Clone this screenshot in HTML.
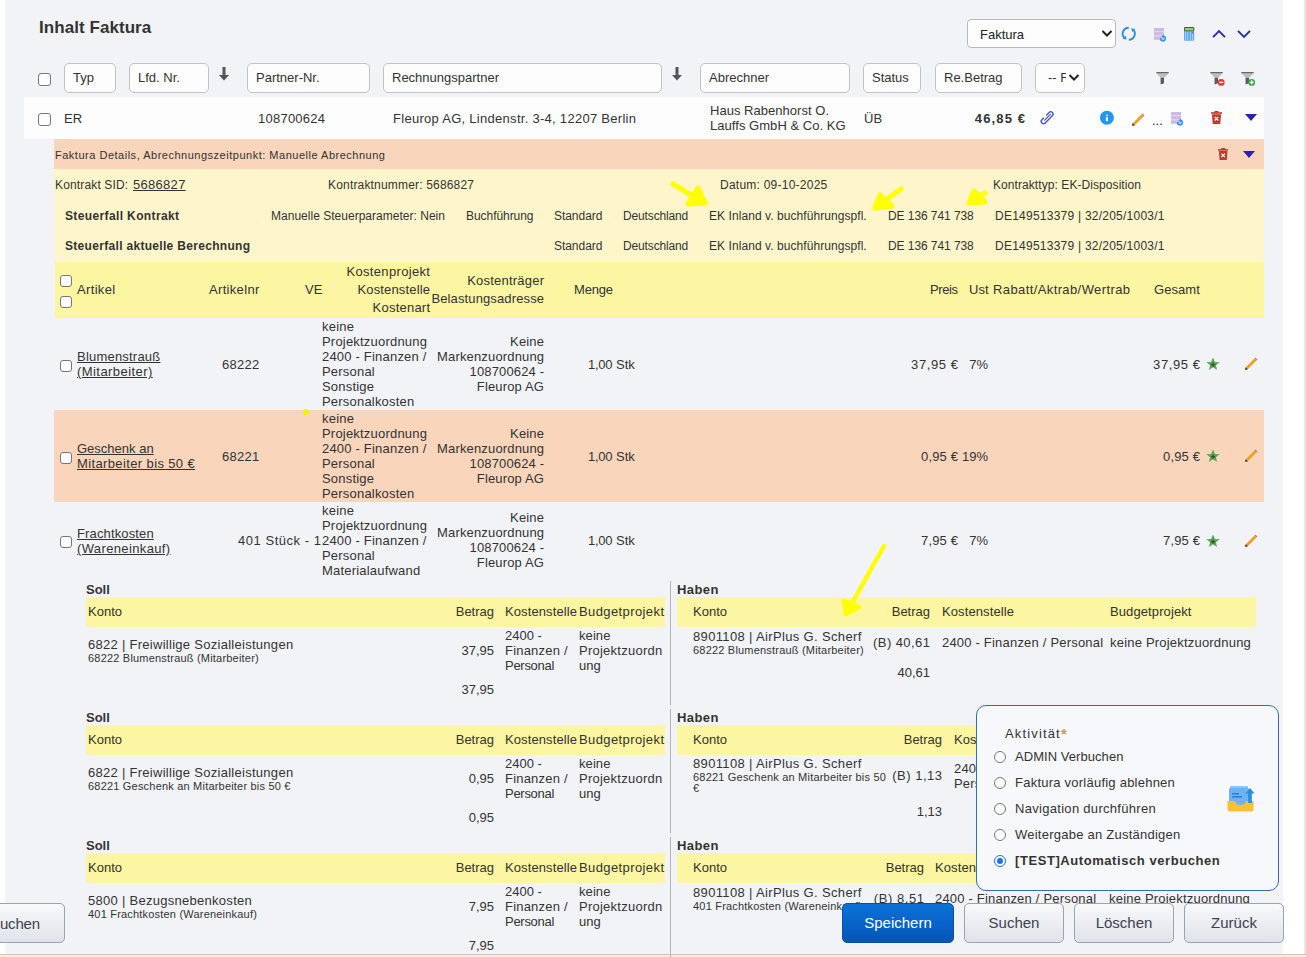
<!DOCTYPE html>
<html><head><meta charset="utf-8"><style>
html,body{margin:0;padding:0;width:1306px;height:957px;overflow:hidden;background:#fff;}
body{position:relative;font-family:"Liberation Sans",sans-serif;color:#333333;}
.a{position:absolute;}
.t{white-space:nowrap;}
.btn{box-sizing:border-box;border-radius:5px;font-size:15px;line-height:38px;text-align:center;font-family:"Liberation Sans",sans-serif;}
</style></head><body>
<div class="a" style="left:0px;top:0px;width:1306px;height:957px;background:#ffffff;"></div>
<div class="a" style="left:5px;top:0px;width:1278px;height:954px;background:#f2f3f7;"></div>
<div class="a" style="left:1304px;top:0px;width:2px;height:954px;background:#e6e6e6;"></div>
<div class="a" style="left:0px;top:954px;width:1306px;height:3px;background:#f6eed9;border-top:1px solid #d2c7ab;box-sizing:border-box;"></div>
<div class="a t" style="top:18.11px;font-size:17px;line-height:20px;letter-spacing:0.061px;font-weight:bold;color:#333;left:39.00px;">Inhalt Faktura</div>
<div class="a" style="left:967px;top:19px;width:149px;height:29px;background:#fdfdfd;border:1px solid #b9b9b9;border-radius:4px;box-sizing:border-box;"></div>
<div class="a t" style="top:27.00px;font-size:13px;line-height:15px;color:#222;left:980.00px;">Faktura</div>
<svg class="a" style="left:1101px;top:29px" width="12" height="9" viewBox="0 0 12 9"><path d="M1.5 2 L6 6.5 L10.5 2" fill="none" stroke="#222" stroke-width="2"/></svg>
<div class="a" style="left:38px;top:73px;width:13px;height:13px;background:#fff;border:1px solid #767676;border-radius:3px;box-sizing:border-box;"></div>
<div class="a" style="left:64px;top:63px;width:52px;height:30px;background:#fdfdfd;border:1px solid #c3c3c3;border-radius:5px;box-sizing:border-box;"></div>
<div class="a t" style="top:70.00px;font-size:13px;line-height:15px;left:73.00px;">Typ</div>
<div class="a" style="left:129px;top:63px;width:80px;height:30px;background:#fdfdfd;border:1px solid #c3c3c3;border-radius:5px;box-sizing:border-box;"></div>
<div class="a t" style="top:70.00px;font-size:13px;line-height:15px;left:138.00px;">Lfd. Nr.</div>
<div class="a" style="left:247px;top:63px;width:123px;height:30px;background:#fdfdfd;border:1px solid #c3c3c3;border-radius:5px;box-sizing:border-box;"></div>
<div class="a t" style="top:70.00px;font-size:13px;line-height:15px;left:256.00px;">Partner-Nr.</div>
<div class="a" style="left:383px;top:63px;width:279px;height:30px;background:#fdfdfd;border:1px solid #c3c3c3;border-radius:5px;box-sizing:border-box;"></div>
<div class="a t" style="top:70.00px;font-size:13px;line-height:15px;left:392.00px;">Rechnungspartner</div>
<div class="a" style="left:700px;top:63px;width:150px;height:30px;background:#fdfdfd;border:1px solid #c3c3c3;border-radius:5px;box-sizing:border-box;"></div>
<div class="a t" style="top:70.00px;font-size:13px;line-height:15px;left:709.00px;">Abrechner</div>
<div class="a" style="left:863px;top:63px;width:58px;height:30px;background:#fdfdfd;border:1px solid #c3c3c3;border-radius:5px;box-sizing:border-box;"></div>
<div class="a t" style="top:70.00px;font-size:13px;line-height:15px;left:872.00px;">Status</div>
<div class="a" style="left:935px;top:63px;width:87px;height:30px;background:#fdfdfd;border:1px solid #c3c3c3;border-radius:5px;box-sizing:border-box;"></div>
<div class="a t" style="top:70.00px;font-size:13px;line-height:15px;left:944.00px;">Re.Betrag</div>
<div class="a" style="left:1035px;top:63px;width:50px;height:30px;background:#fdfdfd;border:1px solid #c3c3c3;border-radius:5px;box-sizing:border-box;"></div>
<div class="a t" style="top:70.00px;font-size:13px;line-height:15px;left:1048.00px;">-- F</div>
<div class="a" style="left:1066px;top:66px;width:18px;height:24px;background:#fdfdfd;"></div>
<svg class="a" style="left:1068px;top:73px" width="12" height="9" viewBox="0 0 12 9"><path d="M1.5 2 L6 6.5 L10.5 2" fill="none" stroke="#222" stroke-width="2"/></svg>
<svg class="a" style="left:218px;top:67px" width="12" height="14" viewBox="0 0 12 14"><path d="M4.5 0 H7.5 V8 H11 L6 13.5 L1 8 H4.5 Z" fill="#555"/></svg>
<svg class="a" style="left:671px;top:67px" width="12" height="14" viewBox="0 0 12 14"><path d="M4.5 0 H7.5 V8 H11 L6 13.5 L1 8 H4.5 Z" fill="#555"/></svg>
<svg class="a" style="left:1155.5px;top:71px" width="17" height="16" viewBox="0 0 17 16"><path d="M0.5 2.2 H12.5 L8.2 6.8 H4.6 Z" fill="#bdbdbd"/><rect x="0.3" y="1" width="12.4" height="1.3" fill="#666"/><path d="M4.6 6.8 H8.0 V12.2 L4.6 13.6 Z" fill="#5a5a5a"/></svg>
<svg class="a" style="left:1209.8px;top:71px" width="17" height="16" viewBox="0 0 17 16"><path d="M0.5 2.2 H12.5 L8.2 6.8 H4.6 Z" fill="#bdbdbd"/><rect x="0.3" y="1" width="12.4" height="1.3" fill="#666"/><path d="M4.6 6.8 H8.0 V12.2 L4.6 13.6 Z" fill="#5a5a5a"/><circle cx="11.2" cy="11.4" r="3.4" fill="#f03434"/><rect x="9.2" y="10.7" width="4" height="1.4" fill="#fff"/></svg>
<svg class="a" style="left:1240.8px;top:71px" width="17" height="16" viewBox="0 0 17 16"><path d="M0.5 2.2 H12.5 L8.2 6.8 H4.6 Z" fill="#bdbdbd"/><rect x="0.3" y="1" width="12.4" height="1.3" fill="#666"/><path d="M4.6 6.8 H8.0 V12.2 L4.6 13.6 Z" fill="#5a5a5a"/><circle cx="10.7" cy="11.4" r="3.4" fill="#36a843"/><rect x="8.7" y="10.7" width="4" height="1.4" fill="#fff"/><rect x="10" y="9.4" width="1.4" height="4" fill="#fff"/></svg>
<svg class="a" style="left:1118px;top:23px" width="24" height="22" viewBox="0 0 24 22">
<path d="M10.8 4.8 A6 6 0 0 0 6.3 14.9" fill="none" stroke="#2b8fe0" stroke-width="1.9"/>
<path d="M4.7 15.8 L7.8 12.8 L8.6 16.5 Z" fill="#2b8fe0"/>
<path d="M10.8 16.8 A6 6 0 0 0 15.2 6.7" fill="none" stroke="#2b8fe0" stroke-width="1.9"/>
<path d="M13.3 5.3 L17.2 6.1 L14.3 8.9 Z" fill="#2b8fe0"/>
</svg>
<svg class="a" style="left:1153px;top:27px" width="15" height="16" viewBox="0 0 15 16">
<rect x="1" y="1" width="10" height="11.7" fill="#e0d4ef"/>
<rect x="1" y="1" width="10" height="3" fill="#cdb8e6"/>
<rect x="1" y="5.2" width="10" height="3" fill="#cdb8e6"/>
<rect x="1" y="9.6" width="10" height="3.1" fill="#cdb8e6"/>
<path d="M10.4 9.3 A2.3 2.3 0 1 1 7.73 11.2" fill="none" stroke="#2196f3" stroke-width="1.6"/>
<path d="M11.0 7.7 L11.0 10.9 L8.3 9.3 Z" fill="#2196f3"/>
</svg>
<svg class="a" style="left:1183px;top:26px" width="12" height="16" viewBox="0 0 12 16">
<rect x="1" y="1" width="10.2" height="13.8" rx="1.4" fill="#5aa9ef"/>
<rect x="1" y="1" width="10.2" height="4.2" rx="1.2" fill="#4a4a4a"/>
<rect x="1.8" y="1.9" width="8.6" height="2.6" fill="#8fd35f"/>
<rect x="2.2" y="5.6" width="0.8" height="8.8" fill="#b5d9f7"/>
<rect x="4.3" y="5.6" width="0.8" height="8.8" fill="#b5d9f7"/>
<rect x="7.0" y="5.6" width="0.8" height="8.8" fill="#b5d9f7"/>
<rect x="9.2" y="5.6" width="0.8" height="8.8" fill="#b5d9f7"/>
<rect x="9.0" y="5.8" width="1.2" height="2" fill="#e0505a"/>
</svg>
<svg class="a" style="left:1211px;top:28px" width="16" height="12" viewBox="0 0 16 12"><path d="M2 9.2 L8 3 L14 9.2" fill="none" stroke="#2b2bb8" stroke-width="1.9"/></svg>
<svg class="a" style="left:1236px;top:28px" width="16" height="12" viewBox="0 0 16 12"><path d="M2 2.8 L8 9 L14 2.8" fill="none" stroke="#2b2bb8" stroke-width="1.9"/></svg>
<div class="a" style="left:24px;top:97px;width:1240px;height:42px;background:#fdfdfd;"></div>
<div class="a" style="left:38px;top:113px;width:13px;height:13px;background:#fff;border:1px solid #767676;border-radius:3px;box-sizing:border-box;"></div>
<div class="a t" style="top:111.00px;font-size:13px;line-height:15px;left:64.00px;">ER</div>
<div class="a t" style="top:111.00px;font-size:13px;line-height:15px;letter-spacing:0.242px;left:258.00px;">108700624</div>
<div class="a t" style="top:111.00px;font-size:13px;line-height:15px;letter-spacing:0.282px;left:393.00px;">Fleurop AG, Lindenstr. 3-4, 12207 Berlin</div>
<div class="a t" style="top:103.00px;font-size:13px;line-height:15px;letter-spacing:0.030px;left:710.00px;">Haus Rabenhorst O.</div>
<div class="a t" style="top:118.00px;font-size:13px;line-height:15px;letter-spacing:0.043px;left:710.00px;">Lauffs GmbH &amp; Co. KG</div>
<div class="a t" style="top:111.00px;font-size:13px;line-height:15px;left:864.00px;">ÜB</div>
<div class="a t" style="top:111.00px;font-size:13px;line-height:15px;letter-spacing:1.141px;font-weight:bold;left:974.80px;">46,85 €</div>
<svg class="a" style="left:1039px;top:109px" width="17" height="17" viewBox="0 0 17 17">
<g transform="translate(8.2 8.6) rotate(45)">
<path d="M-2.3 -1.5 V-5 A2.3 2.3 0 0 1 2.3 -5 V5.2 A2.3 2.3 0 0 1 -2.3 5.2 V3" fill="none" stroke="#4a56bd" stroke-width="1.4" stroke-linecap="round"/>
<path d="M0 -4.6 V3.6" fill="none" stroke="#4a56bd" stroke-width="1.3" stroke-linecap="round"/>
</g></svg>
<svg class="a" style="left:1099px;top:110px" width="16" height="16" viewBox="0 0 16 16"><circle cx="7.9" cy="7.7" r="7" fill="#2196f3"/><rect x="6.9" y="7.2" width="2" height="3.9" fill="#fff"/><rect x="6.9" y="4.7" width="2" height="1.5" fill="#fff"/></svg>
<svg class="a" style="left:1131px;top:113px" width="14" height="14" viewBox="0 0 14 14">
<path d="M1 13 L1.8 10.2 L10.4 1.6 L12.4 3.6 L3.8 12.2 Z" fill="#f0a020"/>
<path d="M10.4 1.6 L11.4 0.6 L13.4 2.6 L12.4 3.6 Z" fill="#e07070"/>
<path d="M1 13 L1.8 10.2 L3.8 12.2 Z" fill="#333"/>
</svg>
<div class="a t" style="top:113.00px;font-size:13px;line-height:15px;color:#223;left:1152.00px;">...</div>
<svg class="a" style="left:1170px;top:111px" width="15" height="16" viewBox="0 0 15 16">
<rect x="1" y="1" width="10" height="11.7" fill="#e0d4ef"/>
<rect x="1" y="1" width="10" height="3" fill="#cdb8e6"/>
<rect x="1" y="5.2" width="10" height="3" fill="#cdb8e6"/>
<rect x="1" y="9.6" width="10" height="3.1" fill="#cdb8e6"/>
<path d="M10.4 9.3 A2.3 2.3 0 1 1 7.73 11.2" fill="none" stroke="#2196f3" stroke-width="1.6"/>
<path d="M11.0 7.7 L11.0 10.9 L8.3 9.3 Z" fill="#2196f3"/>
</svg>
<svg class="a" style="left:1211px;top:111px" width="11.0" height="13.0" viewBox="0 0 11 13">
<rect x="0" y="1.2" width="11" height="1.6" fill="#c0392b"/>
<rect x="3.5" y="0" width="4" height="1.6" fill="#c0392b"/>
<path d="M1 3.2 H10 L9.3 13 H1.7 Z" fill="#c0392b"/>
<path d="M3.7 5.9 L7.3 9.5 M7.3 5.9 L3.7 9.5" stroke="#fff" stroke-width="1.2"/>
</svg>
<svg class="a" style="left:1245px;top:114px" width="12" height="7" viewBox="0 0 12 7"><path d="M0 0 H12 L6.0 7 Z" fill="#2a22b8"/></svg>
<div class="a" style="left:54px;top:139px;width:1210px;height:30px;background:#f8d5bb;"></div>
<div class="a t" style="top:148.69px;font-size:11px;line-height:13px;letter-spacing:0.511px;left:55.00px;">Faktura Details, Abrechnungszeitpunkt: Manuelle Abrechnung</div>
<svg class="a" style="left:1218px;top:148px" width="10.4" height="12.3" viewBox="0 0 11 13">
<rect x="0" y="1.2" width="11" height="1.6" fill="#c0392b"/>
<rect x="3.5" y="0" width="4" height="1.6" fill="#c0392b"/>
<path d="M1 3.2 H10 L9.3 13 H1.7 Z" fill="#c0392b"/>
<path d="M3.7 5.9 L7.3 9.5 M7.3 5.9 L3.7 9.5" stroke="#fff" stroke-width="1.2"/>
</svg>
<svg class="a" style="left:1243px;top:151px" width="12" height="7" viewBox="0 0 12 7"><path d="M0 0 H12 L6.0 7 Z" fill="#2a22b8"/></svg>
<div class="a" style="left:54px;top:169px;width:1210px;height:92px;background:#fef6ca;"></div>
<div class="a t" style="top:177.84px;font-size:12px;line-height:14px;letter-spacing:0.147px;left:55.00px;">Kontrakt SID:</div>
<div class="a t" style="top:177.00px;font-size:13px;line-height:15px;letter-spacing:0.294px;text-decoration:underline;left:133.00px;">5686827</div>
<div class="a t" style="top:177.84px;font-size:12px;line-height:14px;letter-spacing:0.178px;left:328.00px;">Kontraktnummer: 5686827</div>
<div class="a t" style="top:177.84px;font-size:12px;line-height:14px;letter-spacing:0.239px;left:720.00px;">Datum: 09-10-2025</div>
<div class="a t" style="top:177.84px;font-size:12px;line-height:14px;letter-spacing:0.072px;left:993.00px;">Kontrakttyp: EK-Disposition</div>
<div class="a t" style="top:208.84px;font-size:12px;line-height:14px;letter-spacing:0.370px;font-weight:bold;left:65.00px;">Steuerfall Kontrakt</div>
<div class="a t" style="top:208.84px;font-size:12px;line-height:14px;letter-spacing:0.019px;left:271.00px;">Manuelle Steuerparameter: Nein</div>
<div class="a t" style="top:208.84px;font-size:12px;line-height:14px;letter-spacing:-0.054px;left:466.00px;">Buchführung</div>
<div class="a t" style="top:208.84px;font-size:12px;line-height:14px;letter-spacing:-0.046px;left:554.00px;">Standard</div>
<div class="a t" style="top:208.84px;font-size:12px;line-height:14px;letter-spacing:-0.142px;left:623.00px;">Deutschland</div>
<div class="a t" style="top:208.84px;font-size:12px;line-height:14px;letter-spacing:0.065px;left:709.00px;">EK Inland v. buchführungspfl.</div>
<div class="a t" style="top:208.84px;font-size:12px;line-height:14px;letter-spacing:-0.074px;left:888.00px;">DE 136 741 738</div>
<div class="a t" style="top:208.84px;font-size:12px;line-height:14px;letter-spacing:0.240px;left:995.00px;">DE149513379 | 32/205/1003/1</div>
<div class="a t" style="top:238.84px;font-size:12px;line-height:14px;letter-spacing:-0.046px;left:554.00px;">Standard</div>
<div class="a t" style="top:238.84px;font-size:12px;line-height:14px;letter-spacing:-0.142px;left:623.00px;">Deutschland</div>
<div class="a t" style="top:238.84px;font-size:12px;line-height:14px;letter-spacing:0.065px;left:709.00px;">EK Inland v. buchführungspfl.</div>
<div class="a t" style="top:238.84px;font-size:12px;line-height:14px;letter-spacing:-0.074px;left:888.00px;">DE 136 741 738</div>
<div class="a t" style="top:238.84px;font-size:12px;line-height:14px;letter-spacing:0.240px;left:995.00px;">DE149513379 | 32/205/1003/1</div>
<div class="a t" style="top:238.84px;font-size:12px;line-height:14px;letter-spacing:0.309px;font-weight:bold;left:65.00px;">Steuerfall aktuelle Berechnung</div>
<div class="a" style="left:55px;top:262px;width:1209px;height:56px;background:#fcf5a1;"></div>
<div class="a" style="left:60px;top:275px;width:12px;height:12px;background:#fff;border:1px solid #767676;border-radius:3px;box-sizing:border-box;"></div>
<div class="a" style="left:60px;top:296px;width:12px;height:12px;background:#fff;border:1px solid #767676;border-radius:3px;box-sizing:border-box;"></div>
<div class="a t" style="top:282.00px;font-size:13px;line-height:15px;letter-spacing:0.343px;left:77.00px;">Artikel</div>
<div class="a t" style="top:282.00px;font-size:13px;line-height:15px;letter-spacing:0.324px;left:209.00px;">Artikelnr</div>
<div class="a t" style="top:282.00px;font-size:13px;line-height:15px;left:305.00px;">VE</div>
<div class="a t" style="top:264.00px;font-size:13px;line-height:15px;letter-spacing:0.342px;left:346.40px;">Kostenprojekt</div>
<div class="a t" style="top:282.00px;font-size:13px;line-height:15px;letter-spacing:0.150px;left:357.50px;">Kostenstelle</div>
<div class="a t" style="top:300.00px;font-size:13px;line-height:15px;letter-spacing:0.220px;left:372.60px;">Kostenart</div>
<div class="a t" style="top:273.00px;font-size:13px;line-height:15px;letter-spacing:0.216px;left:467.20px;">Kostenträger</div>
<div class="a t" style="top:291.00px;font-size:13px;line-height:15px;letter-spacing:0.127px;left:431.40px;">Belastungsadresse</div>
<div class="a t" style="top:282.00px;font-size:13px;line-height:15px;letter-spacing:-0.170px;left:574.00px;">Menge</div>
<div class="a t" style="top:282.00px;font-size:13px;line-height:15px;letter-spacing:-0.435px;left:930.10px;">Preis</div>
<div class="a t" style="top:282.00px;font-size:13px;line-height:15px;left:969.00px;">Ust</div>
<div class="a t" style="top:282.00px;font-size:13px;line-height:15px;letter-spacing:0.395px;left:993.00px;">Rabatt/Aktrab/Wertrab</div>
<div class="a t" style="top:282.00px;font-size:13px;line-height:15px;letter-spacing:0.060px;left:1154.00px;">Gesamt</div>
<div class="a" style="left:60px;top:360px;width:12px;height:12px;background:#fff;border:1px solid #767676;border-radius:3px;box-sizing:border-box;"></div>
<div class="a t" style="top:349.30px;font-size:13px;line-height:15px;letter-spacing:0.207px;text-decoration:underline;left:77.00px;">Blumenstrauß</div>
<div class="a t" style="top:364.30px;font-size:13px;line-height:15px;letter-spacing:0.436px;text-decoration:underline;left:77.00px;">(Mitarbeiter)</div>
<div class="a t" style="top:356.80px;font-size:13px;line-height:15px;letter-spacing:0.265px;left:222.00px;">68222</div>
<div class="a t" style="top:318.50px;font-size:13px;line-height:15px;letter-spacing:0.200px;left:322.00px;">keine</div>
<div class="a t" style="top:333.50px;font-size:13px;line-height:15px;letter-spacing:0.200px;left:322.00px;">Projektzuordnung</div>
<div class="a t" style="top:348.50px;font-size:13px;line-height:15px;letter-spacing:0.200px;left:322.00px;">2400 - Finanzen /</div>
<div class="a t" style="top:363.50px;font-size:13px;line-height:15px;letter-spacing:0.200px;left:322.00px;">Personal</div>
<div class="a t" style="top:378.50px;font-size:13px;line-height:15px;letter-spacing:0.200px;left:322.00px;">Sonstige</div>
<div class="a t" style="top:393.50px;font-size:13px;line-height:15px;letter-spacing:0.200px;left:322.00px;">Personalkosten</div>
<div class="a t" style="top:333.50px;font-size:13px;line-height:15px;letter-spacing:0.150px;left:510.12px;">Keine</div>
<div class="a t" style="top:348.50px;font-size:13px;line-height:15px;letter-spacing:0.150px;left:437.12px;">Markenzuordnung</div>
<div class="a t" style="top:363.50px;font-size:13px;line-height:15px;letter-spacing:0.150px;left:469.50px;">108700624 -</div>
<div class="a t" style="top:378.50px;font-size:13px;line-height:15px;letter-spacing:0.150px;left:476.87px;">Fleurop AG</div>
<div class="a t" style="top:356.80px;font-size:13px;line-height:15px;letter-spacing:-0.262px;left:588.00px;">1,00</div>
<div class="a t" style="top:356.80px;font-size:13px;line-height:15px;left:616.00px;">Stk</div>
<div class="a t" style="top:356.80px;font-size:13px;line-height:15px;letter-spacing:0.591px;left:911.10px;">37,95 €</div>
<div class="a t" style="top:356.80px;font-size:13px;line-height:15px;left:969.22px;">7%</div>
<div class="a t" style="top:356.80px;font-size:13px;line-height:15px;letter-spacing:0.591px;left:1153.10px;">37,95 €</div>
<svg class="a" style="left:1206px;top:357px" width="14" height="14" viewBox="0 0 14 14"><path d="M7 0.5 L8.9 5 L13.6 5.2 L9.9 8.2 L11.1 13 L7 10.3 L2.9 13 L4.1 8.2 L0.4 5.2 L5.1 5 Z" fill="#4caf50"/><rect x="6.3" y="5.6" width="1.4" height="4.2" fill="#5d4037"/><rect x="4.9" y="7" width="4.2" height="1.4" fill="#5d4037"/></svg>
<svg class="a" style="left:1244px;top:357px" width="14" height="14" viewBox="0 0 14 14">
<path d="M1 13 L1.8 10.2 L10.4 1.6 L12.4 3.6 L3.8 12.2 Z" fill="#f0a020"/>
<path d="M10.4 1.6 L11.4 0.6 L13.4 2.6 L12.4 3.6 Z" fill="#e07070"/>
<path d="M1 13 L1.8 10.2 L3.8 12.2 Z" fill="#333"/>
</svg>
<div class="a" style="left:54px;top:410px;width:1210px;height:92px;background:#f8d5bb;"></div>
<div class="a" style="left:60px;top:452px;width:12px;height:12px;background:#fff;border:1px solid #767676;border-radius:3px;box-sizing:border-box;"></div>
<div class="a t" style="top:441.30px;font-size:13px;line-height:15px;letter-spacing:0.006px;text-decoration:underline;left:77.00px;">Geschenk an</div>
<div class="a t" style="top:456.30px;font-size:13px;line-height:15px;letter-spacing:0.376px;text-decoration:underline;left:77.00px;">Mitarbeiter bis 50 €</div>
<div class="a t" style="top:448.80px;font-size:13px;line-height:15px;letter-spacing:0.265px;left:222.00px;">68221</div>
<div class="a t" style="top:410.50px;font-size:13px;line-height:15px;letter-spacing:0.200px;left:322.00px;">keine</div>
<div class="a t" style="top:425.50px;font-size:13px;line-height:15px;letter-spacing:0.200px;left:322.00px;">Projektzuordnung</div>
<div class="a t" style="top:440.50px;font-size:13px;line-height:15px;letter-spacing:0.200px;left:322.00px;">2400 - Finanzen /</div>
<div class="a t" style="top:455.50px;font-size:13px;line-height:15px;letter-spacing:0.200px;left:322.00px;">Personal</div>
<div class="a t" style="top:470.50px;font-size:13px;line-height:15px;letter-spacing:0.200px;left:322.00px;">Sonstige</div>
<div class="a t" style="top:485.50px;font-size:13px;line-height:15px;letter-spacing:0.200px;left:322.00px;">Personalkosten</div>
<div class="a t" style="top:425.50px;font-size:13px;line-height:15px;letter-spacing:0.150px;left:510.12px;">Keine</div>
<div class="a t" style="top:440.50px;font-size:13px;line-height:15px;letter-spacing:0.150px;left:437.12px;">Markenzuordnung</div>
<div class="a t" style="top:455.50px;font-size:13px;line-height:15px;letter-spacing:0.150px;left:469.50px;">108700624 -</div>
<div class="a t" style="top:470.50px;font-size:13px;line-height:15px;letter-spacing:0.150px;left:476.87px;">Fleurop AG</div>
<div class="a t" style="top:448.80px;font-size:13px;line-height:15px;letter-spacing:-0.262px;left:588.00px;">1,00</div>
<div class="a t" style="top:448.80px;font-size:13px;line-height:15px;left:616.00px;">Stk</div>
<div class="a t" style="top:448.80px;font-size:13px;line-height:15px;letter-spacing:0.172px;left:921.00px;">0,95 €</div>
<div class="a t" style="top:448.80px;font-size:13px;line-height:15px;left:962.00px;">19%</div>
<div class="a t" style="top:448.80px;font-size:13px;line-height:15px;letter-spacing:0.172px;left:1163.00px;">0,95 €</div>
<svg class="a" style="left:1206px;top:449px" width="14" height="14" viewBox="0 0 14 14"><path d="M7 0.5 L8.9 5 L13.6 5.2 L9.9 8.2 L11.1 13 L7 10.3 L2.9 13 L4.1 8.2 L0.4 5.2 L5.1 5 Z" fill="#4caf50"/><rect x="6.3" y="5.6" width="1.4" height="4.2" fill="#5d4037"/><rect x="4.9" y="7" width="4.2" height="1.4" fill="#5d4037"/></svg>
<svg class="a" style="left:1244px;top:449px" width="14" height="14" viewBox="0 0 14 14">
<path d="M1 13 L1.8 10.2 L10.4 1.6 L12.4 3.6 L3.8 12.2 Z" fill="#f0a020"/>
<path d="M10.4 1.6 L11.4 0.6 L13.4 2.6 L12.4 3.6 Z" fill="#e07070"/>
<path d="M1 13 L1.8 10.2 L3.8 12.2 Z" fill="#333"/>
</svg>
<div class="a" style="left:60px;top:536px;width:12px;height:12px;background:#fff;border:1px solid #767676;border-radius:3px;box-sizing:border-box;"></div>
<div class="a t" style="top:525.80px;font-size:13px;line-height:15px;letter-spacing:0.142px;text-decoration:underline;left:77.00px;">Frachtkosten</div>
<div class="a t" style="top:540.80px;font-size:13px;line-height:15px;letter-spacing:0.369px;text-decoration:underline;left:77.00px;">(Wareneinkauf)</div>
<div class="a t" style="top:533.30px;font-size:13px;line-height:15px;letter-spacing:0.536px;left:238.00px;">401 Stück - 1</div>
<div class="a t" style="top:502.50px;font-size:13px;line-height:15px;letter-spacing:0.200px;left:322.00px;">keine</div>
<div class="a t" style="top:517.50px;font-size:13px;line-height:15px;letter-spacing:0.200px;left:322.00px;">Projektzuordnung</div>
<div class="a t" style="top:532.50px;font-size:13px;line-height:15px;letter-spacing:0.200px;left:322.00px;">2400 - Finanzen /</div>
<div class="a t" style="top:547.50px;font-size:13px;line-height:15px;letter-spacing:0.200px;left:322.00px;">Personal</div>
<div class="a t" style="top:562.50px;font-size:13px;line-height:15px;letter-spacing:0.200px;left:322.00px;">Materialaufwand</div>
<div class="a t" style="top:510.00px;font-size:13px;line-height:15px;letter-spacing:0.150px;left:510.12px;">Keine</div>
<div class="a t" style="top:525.00px;font-size:13px;line-height:15px;letter-spacing:0.150px;left:437.12px;">Markenzuordnung</div>
<div class="a t" style="top:540.00px;font-size:13px;line-height:15px;letter-spacing:0.150px;left:469.50px;">108700624 -</div>
<div class="a t" style="top:555.00px;font-size:13px;line-height:15px;letter-spacing:0.150px;left:476.87px;">Fleurop AG</div>
<div class="a t" style="top:533.30px;font-size:13px;line-height:15px;letter-spacing:-0.262px;left:588.00px;">1,00</div>
<div class="a t" style="top:533.30px;font-size:13px;line-height:15px;left:616.00px;">Stk</div>
<div class="a t" style="top:533.30px;font-size:13px;line-height:15px;letter-spacing:0.172px;left:921.00px;">7,95 €</div>
<div class="a t" style="top:533.30px;font-size:13px;line-height:15px;left:969.22px;">7%</div>
<div class="a t" style="top:533.30px;font-size:13px;line-height:15px;letter-spacing:0.172px;left:1163.00px;">7,95 €</div>
<svg class="a" style="left:1206px;top:534px" width="14" height="14" viewBox="0 0 14 14"><path d="M7 0.5 L8.9 5 L13.6 5.2 L9.9 8.2 L11.1 13 L7 10.3 L2.9 13 L4.1 8.2 L0.4 5.2 L5.1 5 Z" fill="#4caf50"/><rect x="6.3" y="5.6" width="1.4" height="4.2" fill="#5d4037"/><rect x="4.9" y="7" width="4.2" height="1.4" fill="#5d4037"/></svg>
<svg class="a" style="left:1244px;top:534px" width="14" height="14" viewBox="0 0 14 14">
<path d="M1 13 L1.8 10.2 L10.4 1.6 L12.4 3.6 L3.8 12.2 Z" fill="#f0a020"/>
<path d="M10.4 1.6 L11.4 0.6 L13.4 2.6 L12.4 3.6 Z" fill="#e07070"/>
<path d="M1 13 L1.8 10.2 L3.8 12.2 Z" fill="#333"/>
</svg>
<div class="a" style="left:303px;top:409px;width:6px;height:6px;border-radius:3px;background:#f7f000"></div>
<div class="a t" style="top:582.30px;font-size:13px;line-height:15px;font-weight:bold;left:86.00px;">Soll</div>
<div class="a" style="left:86px;top:597px;width:579px;height:30px;background:#fcf5a1;"></div>
<div class="a t" style="top:603.50px;font-size:13px;line-height:15px;left:88.00px;">Konto</div>
<div class="a t" style="top:603.50px;font-size:13px;line-height:15px;left:455.72px;">Betrag</div>
<div class="a t" style="top:603.50px;font-size:13px;line-height:15px;letter-spacing:0.105px;left:505.00px;">Kostenstelle</div>
<div class="a t" style="top:603.50px;font-size:13px;line-height:15px;letter-spacing:0.399px;left:579.00px;">Budgetprojekt</div>
<div class="a t" style="top:637.40px;font-size:13px;line-height:15px;letter-spacing:0.280px;left:88.00px;">6822 | Freiwillige Sozialleistungen</div>
<div class="a t" style="top:651.99px;font-size:11px;line-height:13px;letter-spacing:0.200px;left:88.00px;">68222 Blumenstrauß (Mitarbeiter)</div>
<div class="a t" style="top:643.40px;font-size:13px;line-height:15px;left:461.44px;">37,95</div>
<div class="a t" style="top:628.40px;font-size:13px;line-height:15px;left:505.00px;">2400 -</div>
<div class="a t" style="top:643.40px;font-size:13px;line-height:15px;letter-spacing:0.200px;left:505.00px;">Finanzen /</div>
<div class="a t" style="top:658.40px;font-size:13px;line-height:15px;letter-spacing:-0.284px;left:505.00px;">Personal</div>
<div class="a t" style="top:628.40px;font-size:13px;line-height:15px;letter-spacing:0.082px;left:579.00px;">keine</div>
<div class="a t" style="top:643.40px;font-size:13px;line-height:15px;letter-spacing:0.250px;left:579.00px;">Projektzuordn</div>
<div class="a t" style="top:658.40px;font-size:13px;line-height:15px;left:579.00px;">ung</div>
<div class="a t" style="top:682.20px;font-size:13px;line-height:15px;left:461.44px;">37,95</div>
<div class="a" style="left:670px;top:581px;width:1px;height:124px;background:#b4b4b4;"></div>
<div class="a t" style="top:710.30px;font-size:13px;line-height:15px;font-weight:bold;left:86.00px;">Soll</div>
<div class="a" style="left:86px;top:725px;width:579px;height:30px;background:#fcf5a1;"></div>
<div class="a t" style="top:731.50px;font-size:13px;line-height:15px;left:88.00px;">Konto</div>
<div class="a t" style="top:731.50px;font-size:13px;line-height:15px;left:455.72px;">Betrag</div>
<div class="a t" style="top:731.50px;font-size:13px;line-height:15px;letter-spacing:0.105px;left:505.00px;">Kostenstelle</div>
<div class="a t" style="top:731.50px;font-size:13px;line-height:15px;letter-spacing:0.399px;left:579.00px;">Budgetprojekt</div>
<div class="a t" style="top:765.40px;font-size:13px;line-height:15px;letter-spacing:0.280px;left:88.00px;">6822 | Freiwillige Sozialleistungen</div>
<div class="a t" style="top:779.99px;font-size:11px;line-height:13px;letter-spacing:0.200px;left:88.00px;">68221 Geschenk an Mitarbeiter bis 50 €</div>
<div class="a t" style="top:771.40px;font-size:13px;line-height:15px;left:468.71px;">0,95</div>
<div class="a t" style="top:756.40px;font-size:13px;line-height:15px;left:505.00px;">2400 -</div>
<div class="a t" style="top:771.40px;font-size:13px;line-height:15px;letter-spacing:0.200px;left:505.00px;">Finanzen /</div>
<div class="a t" style="top:786.40px;font-size:13px;line-height:15px;letter-spacing:-0.284px;left:505.00px;">Personal</div>
<div class="a t" style="top:756.40px;font-size:13px;line-height:15px;letter-spacing:0.082px;left:579.00px;">keine</div>
<div class="a t" style="top:771.40px;font-size:13px;line-height:15px;letter-spacing:0.250px;left:579.00px;">Projektzuordn</div>
<div class="a t" style="top:786.40px;font-size:13px;line-height:15px;left:579.00px;">ung</div>
<div class="a t" style="top:810.20px;font-size:13px;line-height:15px;left:468.71px;">0,95</div>
<div class="a" style="left:670px;top:709px;width:1px;height:124px;background:#b4b4b4;"></div>
<div class="a t" style="top:838.30px;font-size:13px;line-height:15px;font-weight:bold;left:86.00px;">Soll</div>
<div class="a" style="left:86px;top:853px;width:579px;height:30px;background:#fcf5a1;"></div>
<div class="a t" style="top:859.50px;font-size:13px;line-height:15px;left:88.00px;">Konto</div>
<div class="a t" style="top:859.50px;font-size:13px;line-height:15px;left:455.72px;">Betrag</div>
<div class="a t" style="top:859.50px;font-size:13px;line-height:15px;letter-spacing:0.105px;left:505.00px;">Kostenstelle</div>
<div class="a t" style="top:859.50px;font-size:13px;line-height:15px;letter-spacing:0.399px;left:579.00px;">Budgetprojekt</div>
<div class="a t" style="top:893.40px;font-size:13px;line-height:15px;letter-spacing:0.280px;left:88.00px;">5800 | Bezugsnebenkosten</div>
<div class="a t" style="top:907.99px;font-size:11px;line-height:13px;letter-spacing:0.200px;left:88.00px;">401 Frachtkosten (Wareneinkauf)</div>
<div class="a t" style="top:899.40px;font-size:13px;line-height:15px;left:468.71px;">7,95</div>
<div class="a t" style="top:884.40px;font-size:13px;line-height:15px;left:505.00px;">2400 -</div>
<div class="a t" style="top:899.40px;font-size:13px;line-height:15px;letter-spacing:0.200px;left:505.00px;">Finanzen /</div>
<div class="a t" style="top:914.40px;font-size:13px;line-height:15px;letter-spacing:-0.284px;left:505.00px;">Personal</div>
<div class="a t" style="top:884.40px;font-size:13px;line-height:15px;letter-spacing:0.082px;left:579.00px;">keine</div>
<div class="a t" style="top:899.40px;font-size:13px;line-height:15px;letter-spacing:0.250px;left:579.00px;">Projektzuordn</div>
<div class="a t" style="top:914.40px;font-size:13px;line-height:15px;left:579.00px;">ung</div>
<div class="a t" style="top:938.20px;font-size:13px;line-height:15px;left:468.71px;">7,95</div>
<div class="a" style="left:670px;top:837px;width:1px;height:124px;background:#b4b4b4;"></div>
<div class="a t" style="top:582.30px;font-size:13px;line-height:15px;letter-spacing:0.421px;font-weight:bold;left:677.00px;">Haben</div>
<div class="a" style="left:677px;top:597px;width:579px;height:30px;background:#fcf5a1;"></div>
<div class="a t" style="top:603.50px;font-size:13px;line-height:15px;left:693.00px;">Konto</div>
<div class="a t" style="top:603.50px;font-size:13px;line-height:15px;left:891.72px;">Betrag</div>
<div class="a t" style="top:603.50px;font-size:13px;line-height:15px;letter-spacing:0.100px;left:942.00px;">Kostenstelle</div>
<div class="a t" style="top:603.50px;font-size:13px;line-height:15px;letter-spacing:0.100px;left:1110.00px;">Budgetprojekt</div>
<div class="a t" style="top:629.00px;font-size:13px;line-height:15px;letter-spacing:0.348px;left:693.00px;">8901108 | AirPlus G. Scherf</div>
<div class="a t" style="top:643.99px;font-size:11px;line-height:13px;letter-spacing:0.200px;left:693.00px;">68222 Blumenstrauß (Mitarbeiter)</div>
<div class="a t" style="top:635.30px;font-size:13px;line-height:15px;letter-spacing:0.438px;left:873.00px;">(B) 40,61</div>
<div class="a t" style="top:635.30px;font-size:13px;line-height:15px;letter-spacing:0.200px;left:942.00px;">2400 - Finanzen / Personal</div>
<div class="a t" style="top:635.30px;font-size:13px;line-height:15px;letter-spacing:0.200px;left:1110.00px;">keine Projektzuordnung</div>
<div class="a t" style="top:665.00px;font-size:13px;line-height:15px;left:897.43px;">40,61</div>
<div class="a t" style="top:710.30px;font-size:13px;line-height:15px;letter-spacing:0.421px;font-weight:bold;left:677.00px;">Haben</div>
<div class="a" style="left:677px;top:725px;width:579px;height:30px;background:#fcf5a1;"></div>
<div class="a t" style="top:731.50px;font-size:13px;line-height:15px;left:693.00px;">Konto</div>
<div class="a t" style="top:731.50px;font-size:13px;line-height:15px;left:903.72px;">Betrag</div>
<div class="a t" style="top:731.50px;font-size:13px;line-height:15px;letter-spacing:0.100px;left:954.00px;">Kostenstelle</div>
<div class="a t" style="top:756.20px;font-size:13px;line-height:15px;letter-spacing:0.348px;left:693.00px;">8901108 | AirPlus G. Scherf</div>
<div class="a t" style="top:770.89px;font-size:11px;line-height:13px;letter-spacing:0.200px;left:693.00px;">68221 Geschenk an Mitarbeiter bis 50</div>
<div class="a t" style="top:782.39px;font-size:11px;line-height:13px;left:693.00px;">€</div>
<div class="a t" style="top:768.00px;font-size:13px;line-height:15px;letter-spacing:0.498px;left:892.30px;">(B) 1,13</div>
<div class="a t" style="top:760.50px;font-size:13px;line-height:15px;letter-spacing:0.200px;left:954.00px;">2400 - Finanzen /</div>
<div class="a t" style="top:775.50px;font-size:13px;line-height:15px;letter-spacing:0.200px;left:954.00px;">Personal</div>
<div class="a t" style="top:804.00px;font-size:13px;line-height:15px;left:916.72px;">1,13</div>
<div class="a t" style="top:838.30px;font-size:13px;line-height:15px;letter-spacing:0.421px;font-weight:bold;left:677.00px;">Haben</div>
<div class="a" style="left:677px;top:853px;width:579px;height:30px;background:#fcf5a1;"></div>
<div class="a t" style="top:859.50px;font-size:13px;line-height:15px;left:693.00px;">Konto</div>
<div class="a t" style="top:859.50px;font-size:13px;line-height:15px;left:885.72px;">Betrag</div>
<div class="a t" style="top:859.50px;font-size:13px;line-height:15px;letter-spacing:0.100px;left:935.00px;">Kostenstelle</div>
<div class="a t" style="top:859.50px;font-size:13px;line-height:15px;letter-spacing:0.100px;left:1109.00px;">Budgetprojekt</div>
<div class="a t" style="top:885.30px;font-size:13px;line-height:15px;letter-spacing:0.348px;left:693.00px;">8901108 | AirPlus G. Scherf</div>
<div class="a t" style="top:900.39px;font-size:11px;line-height:13px;letter-spacing:0.200px;left:693.00px;">401 Frachtkosten (Wareneinkauf)</div>
<div class="a t" style="top:891.40px;font-size:13px;line-height:15px;letter-spacing:0.569px;left:873.80px;">(B) 8,51</div>
<div class="a t" style="top:891.40px;font-size:13px;line-height:15px;letter-spacing:0.200px;left:935.00px;">2400 - Finanzen / Personal</div>
<div class="a t" style="top:891.40px;font-size:13px;line-height:15px;letter-spacing:0.200px;left:1109.00px;">keine Projektzuordnung</div>
<div class="a" style="left:976px;top:705px;width:303px;height:186px;background:#f7f8fb;border:1px solid #2f6db5;border-radius:10px;box-sizing:border-box;"></div>
<div class="a t" style="top:726.00px;font-size:13px;line-height:15px;letter-spacing:1.150px;left:1005.00px;">Aktivität</div>
<div class="a t" style="top:724.80px;font-size:15px;line-height:17px;font-weight:bold;color:#f7931e;left:1061.00px;">*</div>
<div class="a" style="left:994px;top:751px;width:12px;height:12px;border-radius:7px;border:1px solid #767676;background:#fff;box-sizing:border-box"></div>
<div class="a t" style="top:749.00px;font-size:13px;line-height:15px;letter-spacing:0.054px;left:1015.00px;">ADMIN Verbuchen</div>
<div class="a" style="left:994px;top:777px;width:12px;height:12px;border-radius:7px;border:1px solid #767676;background:#fff;box-sizing:border-box"></div>
<div class="a t" style="top:775.00px;font-size:13px;line-height:15px;letter-spacing:0.235px;left:1015.00px;">Faktura vorläufig ablehnen</div>
<div class="a" style="left:994px;top:803px;width:12px;height:12px;border-radius:7px;border:1px solid #767676;background:#fff;box-sizing:border-box"></div>
<div class="a t" style="top:801.00px;font-size:13px;line-height:15px;letter-spacing:0.299px;left:1015.00px;">Navigation durchführen</div>
<div class="a" style="left:994px;top:829px;width:12px;height:12px;border-radius:7px;border:1px solid #767676;background:#fff;box-sizing:border-box"></div>
<div class="a t" style="top:827.00px;font-size:13px;line-height:15px;letter-spacing:0.237px;left:1015.00px;">Weitergabe an Zuständigen</div>
<div class="a" style="left:994px;top:855px;width:12px;height:12px;border-radius:7px;border:1px solid #1a73e8;background:#fff;box-sizing:border-box"></div>
<div class="a" style="left:997px;top:858px;width:6px;height:6px;border-radius:3px;background:#1a73e8"></div>
<div class="a t" style="top:853.00px;font-size:13px;line-height:15px;letter-spacing:0.566px;font-weight:bold;left:1015.00px;">[TEST]Automatisch verbuchen</div>
<svg class="a" style="left:1227px;top:785px" width="28" height="28" viewBox="0 0 28 28">
<rect x="3" y="1" width="18" height="3" rx="1" fill="#8ec3f5"/>
<rect x="2" y="3" width="20" height="17" rx="1.5" fill="#6db3f2"/>
<rect x="5" y="8" width="7" height="1.6" fill="#2f7fd0"/>
<rect x="5" y="11" width="10" height="1.6" fill="#2f7fd0"/>
<path d="M0.5 16 H8 Q9 20 13.5 20 Q18 20 19 16 H26.5 V24.5 Q26.5 26.5 24.5 26.5 H2.5 Q0.5 26.5 0.5 24.5 Z" fill="#f7c233"/>
<path d="M23 3 L27.5 8.5 H24.8 V18 H21.2 V8.5 H18.5 Z" fill="#2a8de0"/>
</svg>
<div class="a btn" style="left:-60px;top:903px;width:125px;height:40px;background:linear-gradient(#f8f9fb,#dfe2e9);border:1px solid #9aa3b2;color:#3b4250;"></div>
<div class="a t" style="top:915.30px;font-size:15px;line-height:17px;letter-spacing:-0.219px;color:#3b4250;left:0.00px;">uchen</div>
<div class="a btn" style="left:842px;top:903px;width:112px;height:40px;background:linear-gradient(#0a72d8,#0555b8);border:1px solid #0a4fa0;color:#fff;">Speichern</div>
<div class="a btn" style="left:964px;top:903px;width:100px;height:40px;background:linear-gradient(#f8f9fb,#dfe2e9);border:1px solid #9aa3b2;color:#3b4250;">Suchen</div>
<div class="a btn" style="left:1074px;top:903px;width:100px;height:40px;background:linear-gradient(#f8f9fb,#dfe2e9);border:1px solid #9aa3b2;color:#3b4250;">Löschen</div>
<div class="a btn" style="left:1184px;top:903px;width:100px;height:40px;background:linear-gradient(#f8f9fb,#dfe2e9);border:1px solid #9aa3b2;color:#3b4250;">Zurück</div>
<svg class="a" style="left:0;top:0" width="1306" height="957" viewBox="0 0 1306 957">
<path d="M673 184 L705 203" stroke="#ffff00" stroke-width="5" stroke-linecap="round"/>
<path d="M698 188 L705 203 L688 204 Z" fill="#ffff00" stroke="#ffff00" stroke-width="5" stroke-linejoin="round"/>
</svg>
<svg class="a" style="left:0;top:0" width="1306" height="957" viewBox="0 0 1306 957">
<path d="M901 189 L875 208" stroke="#ffff00" stroke-width="5" stroke-linecap="round"/>
<path d="M880 195 L875 208 L892 206 Z" fill="#ffff00" stroke="#ffff00" stroke-width="5" stroke-linejoin="round"/>
</svg>
<svg class="a" style="left:0;top:0" width="1306" height="957" viewBox="0 0 1306 957">
<path d="M985 193 L969 203" stroke="#ffff00" stroke-width="5" stroke-linecap="round"/>
<path d="M974 191 L969 203 L985 202 Z" fill="#ffff00" stroke="#ffff00" stroke-width="5" stroke-linejoin="round"/>
</svg>
<svg class="a" style="left:0;top:0" width="1306" height="957" viewBox="0 0 1306 957">
<path d="M884 546 L846 614" stroke="#ffff00" stroke-width="4.5" stroke-linecap="round"/>
<path d="M844 601 L846 614 L859 607 Z" fill="#ffff00" stroke="#ffff00" stroke-width="4.5" stroke-linejoin="round"/>
</svg>
</body></html>
